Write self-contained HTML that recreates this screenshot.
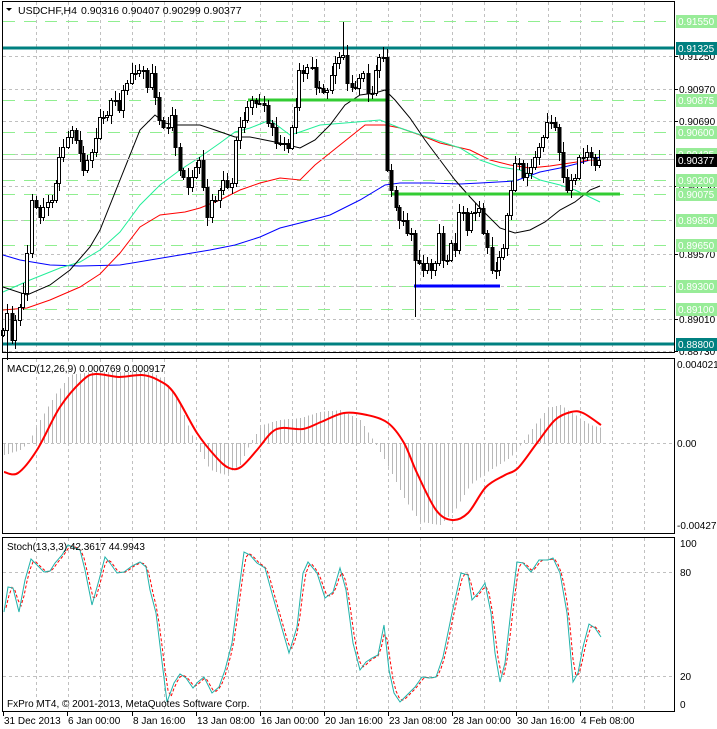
<!DOCTYPE html>
<html><head><meta charset="utf-8"><style>
html,body{margin:0;padding:0;background:#fff;width:717px;height:729px;overflow:hidden}
svg{display:block;font-family:"Liberation Sans",sans-serif}
</style></head><body>
<svg id="c" width="717" height="729" xmlns="http://www.w3.org/2000/svg"></svg>
<script>
var s='';
function L(x1,y1,x2,y2,c,w,d){s+='<line x1="'+x1+'" y1="'+y1+'" x2="'+x2+'" y2="'+y2+'" stroke="'+c+'" stroke-width="'+(w||1)+'"'+(d?' stroke-dasharray="'+d+'"':'')+' shape-rendering="crispEdges"/>';}
function T(x,y,t,c,sz,anchor){s+='<text x="'+x+'" y="'+y+'" fill="'+(c||'#000')+'" font-size="'+(sz||10)+'"'+(anchor?' text-anchor="'+anchor+'"':'')+'>'+t+'</text>';}
function P(pts,c,w,d){s+='<polyline fill="none" stroke="'+c+'" stroke-width="'+(w||1)+'"'+(d?' stroke-dasharray="'+d+'"':'')+' points="'+pts.map(function(p){return p[0]+','+p[1]}).join(' ')+'"/>';}
function S(p,c,w){var d='M'+p[0][0]+','+p[0][1];for(var i=0;i<p.length-1;i++){var p0=p[i-1]||p[i],p1=p[i],p2=p[i+1],p3=p[i+2]||p2;d+=' C'+(p1[0]+(p2[0]-p0[0])/6)+','+(p1[1]+(p2[1]-p0[1])/6)+' '+(p2[0]-(p3[0]-p1[0])/6)+','+(p2[1]-(p3[1]-p1[1])/6)+' '+p2[0]+','+p2[1];}s+='<path d="'+d+'" fill="none" stroke="'+c+'" stroke-width="'+w+'"/>';}
function interp(pts,x){if(x<=pts[0][0])return pts[0][1];for(var i=1;i<pts.length;i++){if(x<=pts[i][0]){var a=pts[i-1],b=pts[i];return a[1]+(b[1]-a[1])*(x-a[0])/(b[0]-a[0]);}}return pts[pts.length-1][1];}
var R=674;
var vx=[36,68,100,132,164,196,228,260,292,324,356,388,420,452,484,516,548,580,612,644];
function vgrid(y1,y2){vx.forEach(function(x){L(x+.5,y1,x+.5,y2,'#c0c0c0',1,'3,3');});}
vgrid(2,352);vgrid(359,533);vgrid(538,711);
[56,89,121,154,186,220,254,286,319,351].forEach(function(y){L(3,y+.5,R,y+.5,'#c0c0c0',1,'3,3');});
[21,100,132,154,180,194,220,245,286,309].forEach(function(y){L(3,y+.5,R,y+.5,'#90ee90',1,'12,9');});
P([[3,255],[20,260],[50,265],[80,266],[120,265],[150,260],[180,255],[210,250],[235,245],[260,237],[280,228],[300,223],[330,215],[360,200],[385,185],[400,183],[430,183],[460,184],[480,183],[515,181],[540,172],[560,168],[580,163],[600,157]],'#0000ff');
P([[3,310],[27,308],[50,300],[80,287],[100,274],[120,253],[140,227],[160,215],[185,212],[200,208],[220,200],[240,190],[260,183],[280,178],[300,180],[315,165],[340,145],[365,125],[385,125],[400,128],[420,135],[440,143],[470,150],[490,160],[510,165],[530,168],[550,166],[570,163],[590,160],[600,160]],'#ff0000');
P([[3,292],[30,280],[60,268],[80,262],[100,250],[120,232],[140,205],[160,185],[180,170],[200,157],[220,143],[235,132],[250,128],[270,120],[290,135],[300,132],[320,125],[345,123],[380,120],[400,128],[430,138],[460,148],[480,160],[500,167],[520,170],[540,180],[560,185],[575,190],[600,202]],'#22ee99');
P([[3,287],[27,295],[50,285],[70,270],[90,247],[100,230],[120,180],[140,130],[155,115],[165,123],[175,125],[200,125],[215,130],[235,137],[250,137],[265,140],[280,143],[300,148],[315,140],[330,125],[345,105],[360,95],[375,93],[385,90],[395,100],[410,118],[425,140],[440,160],[455,180],[470,197],[485,213],[500,228],[515,233],[530,230],[545,222],[560,210],[575,202],[590,190],[600,186]],'#000');
L(3,159.5,R,159.5,'#c0c0c0');
L(3,48,R,48,'#008080',3);L(3,344,R,344,'#008080',3);
L(248,100,386,100,'#33cc33',3);L(391,194,620,194,'#33cc33',3);L(414,286,500,286,'#0000ff',3);
var cl=[[3,330],[7,313],[12,340],[15,320],[20,307],[23,293],[27,253],[32,200],[36,207],[40,217],[43,207],[48,202],[52,200],[56,183],[59,157],[63,147],[68,137],[72,130],[76,140],[80,153],[83,170],[87,160],[92,152],[96,138],[100,117],[103,117],[107,115],[111,100],[115,100],[119,110],[123,90],[127,83],[132,73],[135,73],[139,70],[143,70],[147,87],[152,73],[155,97],[159,120],[163,127],[168,127],[172,115],[175,147],[180,170],[183,177],[188,187],[192,177],[196,167],[199,160],[203,187],[207,217],[212,200],[215,200],[220,190],[223,180],[227,187],[232,183],[236,140],[240,127],[244,120],[247,107],[252,100],[256,103],[259,103],[264,105],[268,123],[272,127],[276,143],[280,143],[284,143],[288,148],[292,127],[296,107],[299,70],[303,73],[307,67],[312,67],[316,87],[319,88],[323,92],[327,90],[332,75],[335,63],[339,57],[343,55],[347,83],[352,87],[355,88],[359,78],[363,73],[368,93],[372,93],[376,70],[379,57],[383,57],[387,170],[391,190],[396,207],[399,220],[403,220],[407,233],[411,233],[415,260],[419,263],[423,270],[427,263],[431,270],[435,263],[439,233],[443,260],[447,260],[451,243],[455,250],[459,212],[463,212],[467,230],[471,213],[475,212],[479,208],[483,233],[487,247],[492,270],[496,270],[499,257],[503,248],[507,215],[511,190],[515,163],[519,163],[523,177],[527,173],[531,167],[535,157],[539,147],[543,137],[547,122],[551,122],[555,127],[559,152],[563,177],[567,190],[571,180],[575,178],[579,157],[583,157],[587,152],[591,157],[595,165],[599,160]];
var prev=335;
cl.forEach(function(p,i){var x=p[0],c=p[1],o=prev;var top=Math.min(o,c),bot=Math.max(o,c);var h1=2+((i*7)%9),h2=2+((i*5)%8);
if(x==343)h1=33;if(x==415)h2=57;if(x==7)h2=30;
L(x+.5,top-h1,x+.5,bot+h2,'#000');
var hh=Math.max(1,bot-top);
if(c<o)s+='<rect x="'+(x-1.5)+'" y="'+top+'.5" width="3" height="'+hh+'" fill="#fff" stroke="#000" shape-rendering="crispEdges"/>';
else s+='<rect x="'+(x-1.5)+'" y="'+top+'" width="4" height="'+(hh+1)+'" fill="#000" shape-rendering="crispEdges"/>';
prev=c;});
s+='<rect x="2.5" y="1.5" width="'+(R-2)+'" height="351" fill="none" stroke="#000"/>';
s+='<rect x="2.5" y="358.5" width="'+(R-2)+'" height="175" fill="none" stroke="#000"/>';
s+='<rect x="2.5" y="537.5" width="'+(R-2)+'" height="174" fill="none" stroke="#000"/>';
s+='<polygon points="6,8 12,8 9,11" fill="#000"/>';
T(18,14,'USDCHF,H4','#000',10.5);T(81,14,'0.90316 0.90407 0.90299 0.90377','#000',10.5);
function lab(y,t,bg,fg){s+='<rect x="676" y="'+(y-6)+'" width="41" height="13" fill="'+bg+'"/>';T(678,y+4,t,fg,10);}
[[56,'0.91250'],[89,'0.90970'],[121,'0.90690'],[186,'0.90130'],[254,'0.89570'],[319,'0.89010'],[351,'0.88730']].forEach(function(a){L(R,a[0]+.5,678,a[0]+.5,'#000');T(679,a[0]+4,a[1],'#000',10);});
[[21,'0.91550'],[100,'0.90875'],[132,'0.90600'],[154,'0.90425'],[180,'0.90200'],[194,'0.90075'],[220,'0.89850'],[245,'0.89650'],[286,'0.89300'],[309,'0.89100']].forEach(function(a){lab(a[0],a[1],'#98ec98','#fff');});
lab(48,'0.91325','#008080','#fff');lab(344,'0.88800','#008080','#fff');
lab(160,'0.90377','#000','#fff');
L(3,443.5,R,443.5,'#c0c0c0',1,'3,3');
var hist=[[4,455],[20,450],[28,443],[40,420],[55,395],[70,375],[90,372],[150,372],[165,380],[180,405],[195,443],[210,470],[225,475],[240,465],[250,443],[262,425],[280,420],[300,418],[320,412],[340,410],[360,420],[375,443],[390,470],[405,500],[420,522],[440,525],[455,510],[470,485],[490,470],[510,458],[522,443],[535,425],[548,408],[560,405],[575,415],[590,425],[601,428]];
for(var x=4;x<=601;x+=4){var y=interp(hist,x);L(x+.5,443,x+.5,y,'#b8b8b8');}
S([[4,472],[18,473],[37,450],[60,407],[83,380],[96,374],[119,377],[142,375],[158,380],[174,393],[197,433],[216,457],[229,468],[241,467],[257,450],[271,433],[282,428],[303,429],[321,422],[344,413],[367,415],[388,423],[404,443],[417,473],[436,510],[452,520],[468,513],[486,487],[505,475],[518,468],[537,443],[555,420],[571,412],[583,413],[601,425]],'#ff0000',2);
T(7,372,'MACD(12,26,9) 0.000769 0.000917','#000',10);
T(677,368,'0.004021','#000',10);T(677,447,'0.00','#000',10);T(677,529,'-0.004276','#000',10);
[572,676].forEach(function(y){L(3,y+.5,R,y+.5,'#c0c0c0',1,'3,3');});
var st=[[4,612],[8,587],[13,588],[19,612],[25,580],[31,559],[37,565],[44,572],[50,571],[55,563],[62,555],[68,545],[73,547],[80,550],[85,570],[92,605],[99,580],[105,557],[110,563],[117,573],[124,572],[132,566],[140,562],[146,567],[150,590],[156,613],[163,670],[167,702],[174,683],[180,674],[186,678],[193,688],[198,682],[204,677],[212,693],[219,687],[225,670],[232,643],[238,597],[244,552],[250,555],[257,563],[265,568],[273,597],[281,625],[289,653],[297,627],[303,573],[308,562],[317,573],[325,598],[333,592],[340,568],[346,590],[353,643],[360,670],[366,662],[372,658],[378,655],[384,625],[389,670],[394,693],[400,702],[407,695],[415,687],[422,677],[429,678],[436,677],[443,657],[452,613],[461,573],[468,575],[472,600],[479,592],[485,583],[491,613],[495,653],[500,682],[505,663],[511,610],[517,562],[523,563],[531,572],[539,560],[548,560],[553,558],[560,573],[567,613],[573,682],[578,673],[583,647],[589,624],[595,628],[601,637]];
var sg=[];for(var x=6;x<=602;x+=3){var a=interp(st,x-4),b=interp(st,x-2),c=interp(st,x);sg.push([x,((a+b+c)/3).toFixed(1)]);}
P(sg,'#ff0000',1,'3,2');
P(st,'#20b2aa',1);
T(7,550,'Stoch(13,3,3) 42.3617 44.9943','#000',10);
T(7,707,'FxPro MT4, © 2001-2013, MetaQuotes Software Corp.','#000',10);
T(680,547,'100','#000',10);T(680,576,'80','#000',10);T(680,680,'20','#000',10);T(680,708,'0','#000',10);
[[2,'31 Dec 2013'],[66,'6 Jan 00:00'],[131,'8 Jan 16:00'],[195,'13 Jan 08:00'],[259,'16 Jan 00:00'],[323,'20 Jan 16:00'],[387,'23 Jan 08:00'],[451,'28 Jan 00:00'],[515,'30 Jan 16:00'],[579,'4 Feb 08:00']].forEach(function(a){L(a[0]+1.5,712,a[0]+1.5,716,'#000');T(a[0]+2,724,a[1],'#000',10);});
document.getElementById('c').innerHTML=s;
</script>
</body></html>
